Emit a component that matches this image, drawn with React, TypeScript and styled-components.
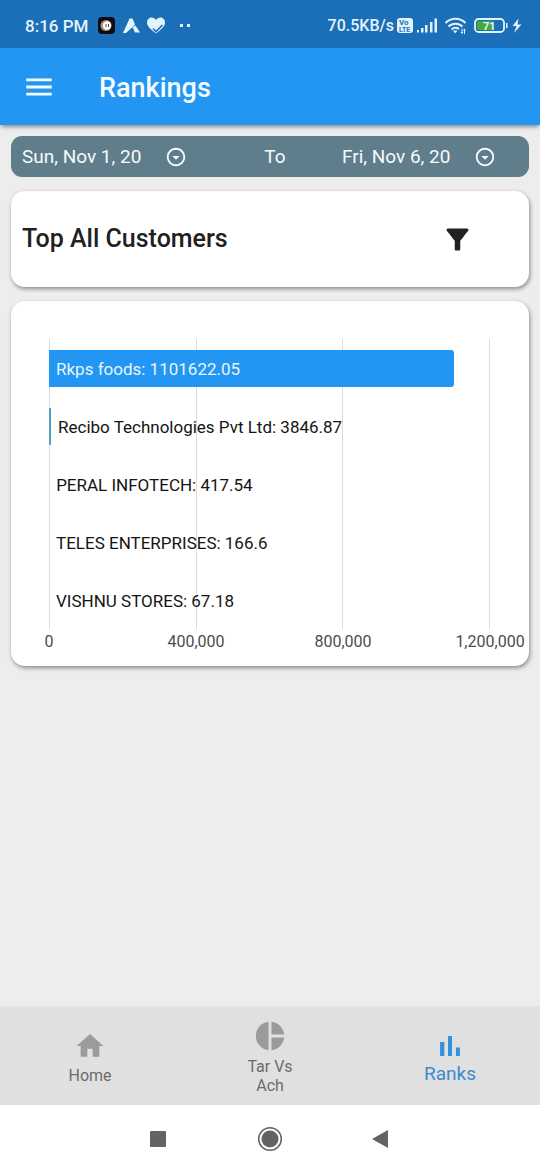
import React from "react";
import styled, { createGlobalStyle } from "styled-components";

const GlobalStyle = createGlobalStyle`
  *, *::before, *::after { box-sizing: border-box; }
  body {
    margin: 0;
    background: #ededed;
    font-family: Roboto, "Liberation Sans", sans-serif;
  }
  button {
    border: 0;
    padding: 0;
    background: none;
    color: inherit;
    font: inherit;
    cursor: pointer;
  }
  svg { display: block; flex: none; }
`;

const Screen = styled.div`
  display: flex;
  flex-direction: column;
  min-height: 100vh;
`;

const StatusBar = styled.div`
  display: flex;
  align-items: center;
  justify-content: space-between;
  height: 48px;
  padding: 4px 17px 0 25px;
  background: #1a6fb8;
  color: #e3f3fc;
  font-size: 17px;
  font-weight: 500;
  line-height: 20px;
`;

const StatusGroup = styled.div<{ $gap: number }>`
  display: flex;
  align-items: center;
  gap: ${(p) => p.$gap}px;
  white-space: nowrap;
`;

const SpeedGroup = styled(StatusGroup)`
  font-size: 16px;
`;

const AppBar = styled.header`
  display: flex;
  align-items: center;
  gap: 43px;
  height: 77px;
  padding: 0 22px;
  background: #2396f3;
  color: #f4fbff;
  box-shadow: 0 3px 4px -1px rgba(0, 0, 0, 0.4);
`;

const AppTitle = styled.h1`
  margin: 0;
  padding-top: 2px;
  font-size: 27px;
  font-weight: 500;
  line-height: 32px;
`;

const Content = styled.main`
  flex: 1;
  display: flex;
  flex-direction: column;
  gap: 14px;
  padding: 11px;
`;

const DateRange = styled.div`
  display: grid;
  grid-template-columns: 93fr 67fr 88fr;
  align-items: center;
  height: 41px;
  padding: 0 11px;
  border-radius: 11px;
  background: #607d8b;
  color: #f5fbfd;
  font-size: 19px;
  line-height: 22px;
`;

const DateButton = styled.button`
  display: flex;
  align-items: center;
  gap: 24px;
  white-space: nowrap;
`;

const RangeWord = styled.span`
  text-align: center;
`;

const Card = styled.section`
  border-radius: 14px;
  background: #fff;
  box-shadow: 1px 2px 4px rgba(0, 0, 0, 0.42);
`;

const HeadingCard = styled(Card)`
  display: flex;
  align-items: center;
  justify-content: space-between;
  height: 96px;
  padding: 0 55px 0 11px;
  color: #212121;
`;

const Heading = styled.h2`
  margin: 0;
  font-size: 25px;
  font-weight: 500;
  line-height: 28px;
`;

const ChartCard = styled(Card)`
  padding: 38px 39px 14px 38px;
`;

const Plot = styled.div`
  display: grid;
`;

const GridLines = styled.div`
  grid-area: 1 / 1;
  display: flex;
  justify-content: space-between;
`;

const GridLine = styled.div`
  width: 1px;
  background: #dcdcdc;
`;

const Bars = styled.div`
  grid-area: 1 / 1;
  display: flex;
  flex-direction: column;
`;

const BarRow = styled.div`
  display: flex;
  align-items: center;
  height: 58px;
  font-size: 17px;
  line-height: 20px;
  white-space: nowrap;
`;

const Bar = styled.div<{ $color: string; $thin: boolean }>`
  display: flex;
  flex: none;
  align-items: center;
  min-width: ${(p) => (p.$color === "transparent" ? 0 : 2)}px;
  height: 37px;
  border-radius: ${(p) => (p.$thin ? "0" : "0 3px 3px 0")};
  background: ${(p) => p.$color};
`;

const BarLabel = styled.span<{ $inside?: boolean }>`
  padding: 2px 0 0 7px;
  color: ${(p) => (p.$inside ? "#e6f6ff" : "#141414")};
`;

const Axis = styled.div`
  display: flex;
  justify-content: space-between;
  padding-top: 3px;
  color: #4c4c4c;
  font-size: 16px;
  line-height: 20px;
`;

const Tick = styled.span`
  display: flex;
  justify-content: center;
  width: 0;
  white-space: nowrap;
`;

const TabBar = styled.nav`
  display: grid;
  grid-template-columns: repeat(3, 1fr);
  height: 98px;
  padding-top: 2px;
  background: #e0e0e0;
  box-shadow: 0 -1px 2px rgba(0, 0, 0, 0.04);
`;

const Tab = styled.a<{ $active?: boolean }>`
  display: flex;
  flex-direction: column;
  align-items: center;
  justify-content: center;
  gap: ${(p) => (p.$active ? 0 : 4)}px;
  color: ${(p) => (p.$active ? "#3190e0" : "#9b9b9b")};
  font-size: ${(p) => (p.$active ? 19 : 16)}px;
  line-height: ${(p) => (p.$active ? 22 : 19)}px;
  text-decoration: none;
`;

const TabLabel = styled.span<{ $active?: boolean }>`
  max-width: 64px;
  color: ${(p) => (p.$active ? "#3a8bd0" : "#6c6c6c")};
  text-align: center;
`;

const SystemBar = styled.div`
  display: flex;
  align-items: center;
  justify-content: center;
  gap: 86px;
  height: 65px;
  padding-top: 3px;
  background: #fff;
  color: #636363;
`;

const CUSTOMERS = [
  { name: "Rkps foods", value: 1101622.05, color: "#2396f3" },
  { name: "Recibo Technologies Pvt Ltd", value: 3846.87, color: "#4fa3be" },
  { name: "PERAL INFOTECH", value: 417.54, color: "transparent" },
  { name: "TELES ENTERPRISES", value: 166.6, color: "transparent" },
  { name: "VISHNU STORES", value: 67.18, color: "transparent" },
];
const TICKS = [0, 400000, 800000, 1200000];
const MAX = 1200000;

function Glyph({ d, size }: { d: string; size: number }) {
  return (
    <svg width={size} height={size} viewBox="0 0 24 24" fill="currentColor" aria-hidden="true">
      <path d={d} />
    </svg>
  );
}

const PATHS = {
  menu: "M3 18h18v-2H3v2zm0-5h18v-2H3v2zm0-7v2h18V6H3z",
  dropCircle:
    "M12 4c4.41 0 8 3.59 8 8s-3.59 8-8 8-8-3.59-8-8 3.59-8 8-8m0-2C6.48 2 2 6.48 2 12s4.48 10 10 10 10-4.48 10-10S17.52 2 12 2zm0 13l-4-4h8z",
  filter:
    "M4.25 5.61C6.27 8.2 10 13 10 13v6c0 .55.45 1 1 1h2c.55 0 1-.45 1-1v-6s3.72-4.8 5.74-7.39A.998.998 0 0 0 18.95 4H5.04c-.83 0-1.3.95-.79 1.61z",
  home: "M10 20v-6h4v6h5v-8h3L12 3 2 12h3v8z",
  pie: "M11 2v20c-5.07-.5-9-4.79-9-10s3.93-9.5 9-10zm2.03 0v8.99H22c-.47-4.74-4.24-8.52-8.97-8.99zm0 11.01V22c4.74-.47 8.5-4.25 8.97-8.99h-8.97z",
  bars: "M5 9.2h3V19H5zM10.6 5h2.8v14h-2.8zm5.6 8H19v6h-2.8z",
};

function LeftStatusIcons() {
  return (
    <svg width="93" height="20" viewBox="0 0 93 20" aria-hidden="true">
      <rect x="0" y="1" width="17" height="17" rx="4" fill="#0b0d10" />
      <circle cx="8" cy="9.5" r="5.5" fill="#b58d74" />
      <circle cx="9" cy="9.5" r="4.2" fill="#fff" />
      <path d="M8 8v3M10.5 8v3" stroke="#4b4745" strokeWidth="1" />
      <path d="M31.5 2.5h3l2.500 6-3 3-6 5.500H25zM34.500 11l3-1.500 4.500 7h-5z" fill="#e3f3fc" />
      <path
        d="M58 17.5C53 13.5 49 10.5 49 6.5 49 3.5 51 1.5 53.5 1.5c2 0 3.5 1 4.5 2.5 1-1.5 2.5-2.5 4.5-2.5C65 1.5 67 3.5 67 6.5c0 4-4 7-9 11z"
        fill="#e3f3fc"
      />
      <path d="M55 12.5l3 3 6.5-6.5" fill="none" stroke="#1a6fb8" strokeWidth="1.6" />
      <rect x="82" y="8" width="3" height="3" fill="#e3f3fc" />
      <rect x="89" y="8" width="3" height="3" fill="#e3f3fc" />
    </svg>
  );
}

function RightStatusIcons() {
  return (
    <svg width="126" height="20" viewBox="0 0 126 20" fill="#e3f3fc" aria-hidden="true">
      <rect x="0" y="2" width="16" height="15" rx="3" />
      <text x="2" y="9" fontSize="8" fontWeight="700" fill="#1a6fb8">Vo</text>
      <text x="2" y="16" fontSize="7" fontWeight="700" fill="#1a6fb8">LTE</text>
      <path d="M20 14h2v2.5h-2zM24 12h2.5v4.5H24zM28 9h2.5v7.5H28zM33 6h2.5v10.5H33zM37.5 2.5H40v14h-2.5z" />
      <g fill="none" stroke="#e3f3fc" strokeWidth="2">
        <path d="M48.5 7a14 14 0 0 1 20 0" />
        <path d="M51.5 10.5a10 10 0 0 1 14 0" />
        <path d="M54.5 13.5a6 6 0 0 1 7.5-.5" />
      </g>
      <path d="M56 14.5h4.5L58.2 17.5z" />
      <path d="M64.5 12.5h1v3.5h1l-1.5 2-1.5-2h1zM68 18h-1v-3.5h-1l1.5-2 1.5 2h-1z" />
      <rect x="78" y="3" width="29" height="13" rx="3.5" fill="none" stroke="#e3f3fc" strokeWidth="1.8" />
      <path d="M81.5 5H96v9H81.5a1.5 1.5 0 0 1-1.5-1.5v-6A1.5 1.5 0 0 1 81.5 5z" fill="#42ac35" />
      <path d="M109 7h1.5v5H109z" />
      <text x="86" y="14" fontSize="11" fontWeight="700">71</text>
      <path d="M121.5 2.5L115.5 10h4l-2.5 7 7.5-8.5h-4z" />
    </svg>
  );
}

export default function App() {
  return (
    <Screen>
      <GlobalStyle />
      <StatusBar>
        <StatusGroup $gap={10}>
          <span>8:16 PM</span>
          <LeftStatusIcons />
        </StatusGroup>
        <SpeedGroup $gap={3}>
          <span>70.5KB/s</span>
          <RightStatusIcons />
        </SpeedGroup>
      </StatusBar>

      <AppBar>
        <button type="button" aria-label="Open menu">
          <Glyph d={PATHS.menu} size={34} />
        </button>
        <AppTitle>Rankings</AppTitle>
      </AppBar>

      <Content>
        <DateRange>
          <DateButton type="button">
            Sun, Nov 1, 20
            <Glyph d={PATHS.dropCircle} size={22} />
          </DateButton>
          <RangeWord>To</RangeWord>
          <DateButton type="button">
            Fri, Nov 6, 20
            <Glyph d={PATHS.dropCircle} size={22} />
          </DateButton>
        </DateRange>

        <HeadingCard>
          <Heading>Top All Customers</Heading>
          <button type="button" aria-label="Filter customers">
            <Glyph d={PATHS.filter} size={33} />
          </button>
        </HeadingCard>

        <ChartCard aria-label="Customer ranking chart">
          <Plot>
            <GridLines>
              {TICKS.map((t) => (
                <GridLine key={t} />
              ))}
            </GridLines>
            <Bars>
              {CUSTOMERS.map((c) => {
                const inside = c.value > MAX / 2;
                const label = (
                  <BarLabel $inside={inside}>{`${c.name}: ${c.value}`}</BarLabel>
                );
                return (
                  <BarRow key={c.name}>
                    <Bar
                      $color={c.color}
                      $thin={!inside}
                      style={{ width: `${(c.value / MAX) * 100}%` }}
                    >
                      {inside && label}
                    </Bar>
                    {!inside && label}
                  </BarRow>
                );
              })}
            </Bars>
          </Plot>
          <Axis>
            {TICKS.map((t) => (
              <Tick key={t}>{t.toLocaleString("en-US")}</Tick>
            ))}
          </Axis>
        </ChartCard>
      </Content>

      <TabBar>
        <Tab href="#home">
          <Glyph d={PATHS.home} size={32} />
          <TabLabel>Home</TabLabel>
        </Tab>
        <Tab href="#targets">
          <Glyph d={PATHS.pie} size={34} />
          <TabLabel>Tar Vs Ach</TabLabel>
        </Tab>
        <Tab href="#ranks" $active aria-current="page">
          <Glyph d={PATHS.bars} size={34} />
          <TabLabel $active>Ranks</TabLabel>
        </Tab>
      </TabBar>

      <SystemBar>
        <button type="button" aria-label="Recent apps">
          <svg width="26" height="26" viewBox="0 0 26 26" fill="currentColor">
            <rect x="5" y="5" width="16" height="16" rx="1" />
          </svg>
        </button>
        <button type="button" aria-label="Home screen">
          <svg width="26" height="26" viewBox="0 0 26 26" fill="currentColor">
            <circle cx="13" cy="13" r="11.3" fill="none" stroke="currentColor" strokeWidth="1.5" />
            <circle cx="13" cy="13" r="8.5" />
          </svg>
        </button>
        <button type="button" aria-label="Back">
          <svg width="26" height="26" viewBox="0 0 26 26" fill="currentColor">
            <path d="M3 13L19 4v18z" />
          </svg>
        </button>
      </SystemBar>
    </Screen>
  );
}
